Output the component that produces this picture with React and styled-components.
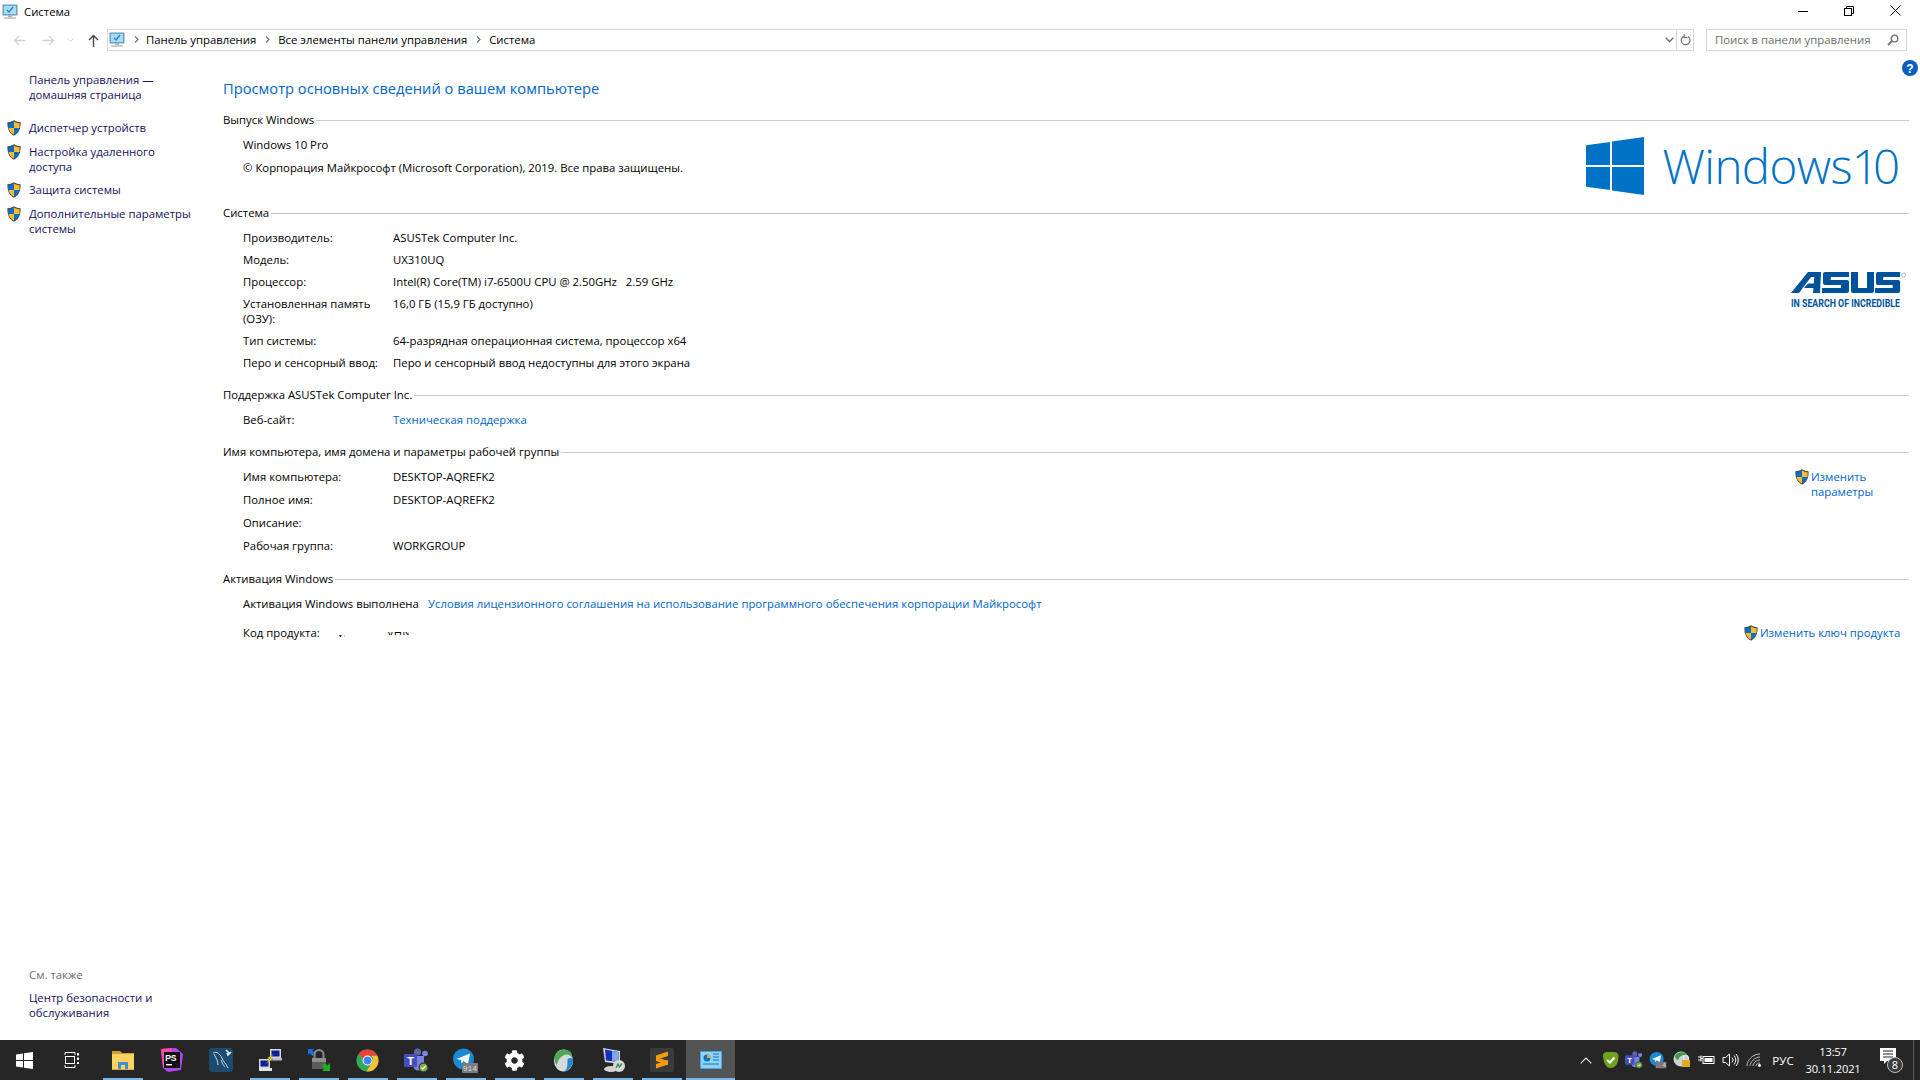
import React from "react";
import styled, { createGlobalStyle } from "styled-components";
import { FaCog } from "react-icons/fa";

const Global = createGlobalStyle`
  html, body { margin: 0; padding: 0; background: #fff; }
  #root { width: 1920px; height: 1080px; overflow: hidden; }
  * { box-sizing: border-box; }
`;

const Page = styled.div`
  width: 1920px; height: 1080px; display: flex; flex-direction: column;
  font-family: "Open Sans", "Noto Sans", "Liberation Sans", sans-serif;
  font-size: 11.35px; line-height: 15px; color: #000; background: #fff;
`;

/* Title bar */
const TitleBar = styled.div`
  height: 24px; flex: none; display: flex; align-items: flex-start;
`;
const TitleIconSlot = styled.div`
  width: 24px; padding: 4px 0 0 2px; flex: none; line-height: 0;
`;
const TitleText = styled.div`
  flex: 1; padding-top: 4px;
`;
const WinButton = styled.div`
  width: 46px; height: 21px; display: flex; align-items: center; justify-content: center; flex: none;
`;
const WinButtons = styled.div`
  display: flex; padding-right: 2px;
`;

/* Navigation bar */
const NavBar = styled.div`
  height: 22px; margin-top: 5px; flex: none; display: flex; align-items: center;
`;
const NavButtons = styled.div`
  width: 107px; flex: none; display: flex; align-items: center; height: 100%;
`;
const NavButton = styled.div`
  width: ${p => p.$w}px; height: 100%; display: flex; align-items: center; justify-content: center; flex: none;
`;
const AddressBar = styled.div`
  width: 1587px; height: 22px; border: 1px solid #d9d9d9; display: flex; align-items: center; flex: none;
`;
const AddressIcon = styled.div`
  width: 18px; padding-left: 1px; line-height: 0; flex: none;
`;
const Crumbs = styled.div`
  flex: 1; display: flex; align-items: center; white-space: nowrap; padding-bottom: 1px;
`;
const CrumbSep = styled.div`
  width: ${p => p.$w}px; display: flex; align-items: center; justify-content: center; flex: none; line-height: 0;
`;
const Crumb = styled.span`
  color: #000;
`;
const AddrDrop = styled.div`
  width: 14px; height: 100%; display: flex; align-items: center; justify-content: center; flex: none;
`;
const AddrRefresh = styled.div`
  width: 17px; height: 100%; border-left: 1px solid #d9d9d9; display: flex; align-items: center; justify-content: center; flex: none;
`;
const SearchBox = styled.div`
  width: 201px; height: 22px; margin-left: 12px; border: 1px solid #d9d9d9; display: flex; align-items: center;
  justify-content: space-between; padding: 0 7px 1px 8px; color: #6d6d6d; flex: none;
`;

/* Body */
const Body = styled.div`
  flex: 1; min-height: 0; display: flex;
`;
const Sidebar = styled.aside`
  width: 223px; flex: none; display: flex; flex-direction: column; padding: 21px 0 20px 0;
`;
const SideHome = styled.div`
  padding-left: 29px; margin-bottom: 18px; color: #15105c; width: 170px;
`;
const SideItem = styled.div`
  display: flex; margin-bottom: 8px; color: #15105c;
`;
const ShieldSlot = styled.div`
  width: 29px; flex: none; padding: 0 0 0 7px; line-height: 0;
`;
const SideText = styled.div`
  width: 165px;
`;
const SeeAlso = styled.div`
  margin-top: auto; padding-left: 29px;
`;
const SeeTitle = styled.div`
  color: #6d6d6d; margin-bottom: 8px;
`;
const SeeLink = styled.div`
  color: #15105c; width: 150px;
`;

const Main = styled.main`
  flex: 1; min-width: 0; padding: 27px 11px 0 0; position: relative;
`;
const HelpIcon = styled.div`
  position: absolute; right: 2px; top: 9px; line-height: 0;
`;
const HelpMark = styled.text`
  font-family: "Liberation Sans", sans-serif; font-weight: 700; font-size: 12px; fill: #fff;
`;
const Heading = styled.h1`
  margin: 0 0 14px 0; font-weight: 400; font-size: 14.7px; line-height: 20px; color: #0066cc;
`;
const SectionHead = styled.div`
  display: flex; align-items: center; height: 15px; gap: 2px;
  &::after { content: ""; flex: 1; height: 1px; margin-top: 2px; background: #c8c8c8; }
`;
const SectionBody = styled.div`
  padding: ${p => p.$pt}px 0 0 20px; margin-bottom: ${p => p.$mb ?? 0}px; display: flex; justify-content: space-between;
`;
const Rows = styled.div`
  display: flex; flex-direction: column; gap: ${p => p.$gap}px; flex: none;
`;
const Row = styled.div`
  display: flex;
`;
const Key = styled.div`
  width: ${p => p.$w ?? 150}px; flex: none; padding-right: ${p => p.$pr ?? 0}px;
`;
const Val = styled.div`
  white-space: pre;
`;
const Link = styled.span`
  color: #0066cc;
`;
const Aside = styled.div`
  flex: none; display: flex; flex-direction: column;
`;
const WinLogoWrap = styled.div`
  display: flex; align-items: center; margin-top: -1px; padding-right: 15px; gap: 18px;
`;
const WinWord = styled.div`
  font-weight: 300; font-size: 47.5px; line-height: 60px; color: #0072c6; letter-spacing: -0.6px; word-spacing: -12px; white-space: nowrap;
`;
const WinVersion = styled.span`
  letter-spacing: -6px;
`;
const AsusSlot = styled.div`
  line-height: 0; margin-top: 42px;
`;
const ChangeLink = styled.div`
  display: flex; width: ${p => p.$w}px; margin-right: ${p => p.$mr}px; padding-top: ${p => p.$pt ?? 0}px; flex: none; color: #0066cc;
  white-space: ${p => (p.$nowrap ? "nowrap" : "normal")};
`;
const ShieldTight = styled.div`
  flex: none; width: 16px; line-height: 0;
`;
const Redact = styled.div`
  display: flex; width: 80px;
`;
const RedactBit = styled.span`
  overflow: hidden; display: block; height: ${p => p.$h}px; width: ${p => p.$w}px; margin-top: ${p => p.$t}px; margin-left: ${p => p.$l}px;
  & > i { display: block; font-style: normal; white-space: nowrap; margin-top: ${p => -p.$t}px; }
`;

/* Taskbar */
const Taskbar = styled.footer`
  height: 40px; flex: none; background: #262626; display: flex; color: #fff;
`;
const Cell = styled.div`
  width: 49px; height: 40px; flex: none; display: flex; align-items: center; justify-content: center; position: relative; line-height: 0;
  padding-right: ${p => p.$pr ?? 0}px;
  background: ${p => (p.$active ? "#545454" : "transparent")};
  ${p => p.$open && `
    &::after { content: ""; position: absolute; bottom: 0; height: 2px; background: #76b9ed;
      left: ${p.$active ? 0 : 5}px; right: ${p.$active ? 0 : 4}px; }
  `}
`;
const Tray = styled.div`
  margin-left: auto; display: flex; align-items: center; height: 40px;
`;
const TrayIcon = styled.div`
  width: 24px; height: 40px; display: flex; align-items: center; justify-content: center; flex: none; line-height: 0;
`;
const Lang = styled.div`
  width: 34px; text-align: center; font-size: 11.5px; color: #fff; flex: none;
`;
const Clock = styled.div`
  width: 66px; margin-right: 5px; text-align: center; font-size: 11.2px; letter-spacing: -0.2px; line-height: 17px; color: #fff; flex: none;
`;
const Notif = styled.div`
  width: 44px; height: 40px; display: flex; align-items: center; justify-content: center; flex: none; line-height: 0;
`;
const ShowDesk = styled.div`
  width: 5px; height: 40px; flex: none; border-left: 1px solid #5f5f5f; margin-left: -2px; margin-right: 2px;
`;

/* Icons */
const SysIcon = ({ s = 16 }) => (
  <svg width={s} height={s} viewBox="0 0 16 16">
    <rect x="1" y="1" width="14" height="10" fill="#5fb6ea" stroke="#7d8fa0" strokeWidth="1" />
    <rect x="2" y="2" width="12" height="8" fill="#a5dcf8" />
    <path d="M5 6l2 2 4-5" stroke="#2a7fc0" strokeWidth="1.3" fill="none" />
    <rect x="6" y="11" width="4" height="2" fill="#aeb6bc" />
    <rect x="2" y="13" width="12" height="2" fill="#c7ccd1" />
  </svg>
);
const Shield = ({ w = 14, h = 16 }) => (
  <svg width={w} height={h} viewBox="0 0 14 16">
    <path d="M7 0.3C5 1.6 2.6 2.3 0.4 2.3 0.2 8 1.5 13 7 15.8 12.5 13 13.8 8 13.6 2.3 11.4 2.3 9 1.6 7 0.3Z" fill="#4c4c4c" />
    <path d="M7 1.5V8H1.5C1.4 6 1.4 4.7 1.5 3.3 3.3 3.2 5.3 2.6 7 1.5Z" fill="#0b6fc9" />
    <path d="M7 1.5V8H12.5C12.6 6 12.6 4.7 12.5 3.3 10.7 3.2 8.7 2.6 7 1.5Z" fill="#f9bd2b" />
    <path d="M1.6 8H7V14.6C3.6 12.8 2 10.6 1.6 8Z" fill="#f9bd2b" />
    <path d="M12.4 8H7V14.6C10.4 12.8 12 10.6 12.4 8Z" fill="#0b6fc9" />
  </svg>
);
const BigWin = () => (
  <svg width="58" height="58" viewBox="0 0 58 58">
    <path d="M0 8.2L24 5V28H0Z M26 4.6L58 0V28H26Z M0 30H24V53L0 49.8Z M26 30H58V58L26 53.4Z" fill="#0072c6" />
  </svg>
);
const Arrow = ({ dir, color }) => (
  <svg width="13" height="11" viewBox="0 0 13 11" style={{ transform: dir === "r" ? "scaleX(-1)" : "none" }}>
    <path d="M12.5 5.5H1.5M6 1L1.5 5.5L6 10" fill="none" stroke={color} strokeWidth="1.3" />
  </svg>
);
const Chev = ({ c = "#707070" }) => (
  <svg width="5" height="7" viewBox="0 0 5 7"><path d="M1 .5L4 3.5L1 6.5" fill="none" stroke={c} strokeWidth="1.2" /></svg>
);
const AsusS = "M3 0H27V5H9L8.6 8H25Q27 8 27 10V19Q27 21 25 21H0V16H19V13H3Q1 13 1 11V2Q1 0 3 0Z";
const AsusLogo = () => (
  <svg width="118" height="38" viewBox="0 0 118 38">
    <g fill="#00539b">
      <path d="M0 21L17 0H30L29 21H22L22.4 16H13L17 11.5H22.8L23.3 5H20L8 21Z" />
      <path d={AsusS} transform="translate(31 0)" />
      <path d="M60 0H67V16H76V0H83V19Q83 21 81 21H62Q60 21 60 19Z" />
      <path d={AsusS} transform="translate(84 0) scale(.93 1)" />
    </g>
    <text x="0" y="35" fontFamily="Roboto, Liberation Sans" fontWeight="700" fontSize="11" textLength="109" lengthAdjust="spacingAndGlyphs" fill="#00539b">IN SEARCH OF INCREDIBLE</text>
    <circle cx="112.5" cy="3" r="2" fill="none" stroke="#5b8fc0" strokeWidth=".6" />
  </svg>
);
const StartLogo = () => (
  <svg width="17" height="17" viewBox="0 0 17 17"><path d="M0 2.4L7 1.4V8H0Z M8 1.2L17 0V8H8Z M0 9H7V15.6L0 14.6Z M8 9H17V17L8 15.8Z" fill="#fff" /></svg>
);
const TaskView = () => (
  <svg width="16" height="16" viewBox="0 0 16 16" fill="none" stroke="#fff" strokeWidth="1">
    <path d="M1 .5H11M1 15.5H11M1 3V.5M11 3V.5M1 13V15.5M11 13V15.5" />
    <rect x="1.5" y="4.5" width="9" height="7" />
    <path d="M14 1V3.5M14 5.5V8M14 10V12" strokeWidth="2" />
  </svg>
);
const Folder = () => (
  <svg width="22" height="20" viewBox="0 0 22 20">
    <path d="M0 1H8L10 3H22V19H0Z" fill="#d69b2f" />
    <rect y="4" width="22" height="16" fill="#fcd35f" />
    <path d="M6 20V12H16V20H13V15H9V20Z" fill="#3c8fd6" />
    <rect x="0" y="19" width="22" height="1" fill="#e0a93f" />
  </svg>
);
const PhpStorm = () => (
  <svg width="24" height="24" viewBox="0 0 24 24">
    <path d="M1 1L16 0 23 6 21 22 8 24 3 20Z" fill="#b345f1" />
    <path d="M1 1L12 0 9 8 3 20Z" fill="#fc4fa1" />
    <rect x="4" y="4" width="16" height="16" fill="#111" />
    <text x="5.2" y="12.5" fontFamily="Liberation Sans" fontWeight="700" fontSize="8.5" fill="#fff">PS</text>
    <rect x="6" y="16" width="6" height="1.4" fill="#fff" />
  </svg>
);
const Workbench = () => (
  <svg width="24" height="24" viewBox="0 0 24 24">
    <rect width="24" height="24" rx="3" fill="#1e4a6e" />
    <path d="M4 5C8 3 11 6 13 10C14 14 17 15 19 20M5 6C7 10 9 13 9 17M12 12C14 17 15 18 16 19" fill="none" stroke="#c7d8e6" strokeWidth="1" />
    <path d="M17 2L20 5M22 4L19 7L18 5" stroke="#e4edf4" strokeWidth="1.6" fill="none" />
  </svg>
);
const Putty = () => (
  <svg width="24" height="24" viewBox="0 0 24 24">
    <rect x="12" y="1" width="11" height="9" fill="#d7d7d7" />
    <rect x="13.5" y="2.5" width="8" height="6" fill="#0a1e9c" />
    <rect x="13" y="10" width="11" height="2.5" fill="#bdbdbd" />
    <rect x="1" y="11" width="11" height="9" fill="#d7d7d7" />
    <rect x="2.5" y="12.5" width="8" height="6" fill="#0a1e9c" />
    <rect x="1" y="20" width="13" height="3" fill="#e2e2e2" />
    <path d="M16 6L9 10 12 11 7 16 15 11 12 10Z" fill="#f5e61b" stroke="#3a3a00" strokeWidth=".3" />
  </svg>
);
const VpnLock = () => (
  <svg width="24" height="24" viewBox="0 0 24 24">
    <path d="M1 1H7L5.3 2.7 8 5.4 5.4 8 2.7 5.3 1 7Z" fill="#1b6fe0" />
    <path d="M7.5 10V6.5a4.5 4.5 0 0 1 9 0V10" fill="none" stroke="#8c8c8c" strokeWidth="2" />
    <rect x="5" y="10" width="14" height="11" rx="1" fill="#5b5b5b" />
    <rect x="5" y="10" width="14" height="4" fill="#8f8f8f" />
    <path d="M23 23H15L17.5 20.5 15 18 18 15 20.5 17.5 23 15Z" fill="#19b21f" />
  </svg>
);
const Chrome = ({ s = 23 }) => (
  <svg width={s} height={s} viewBox="0 0 24 24">
    <circle cx="12" cy="12" r="11.5" fill="#34a853" />
    <path d="M12 .5A11.5 11.5 0 0 1 22.2 7H12A5 5 0 0 0 7.5 10L2.6 5.3A11.5 11.5 0 0 1 12 .5Z" fill="#ea4335" />
    <path d="M22.2 7A11.5 11.5 0 0 1 11 23.5L16.2 14.6A5 5 0 0 0 16 7Z" fill="#fbc02d" />
    <circle cx="12" cy="12" r="5.2" fill="#fff" />
    <circle cx="12" cy="12" r="4.2" fill="#4285f4" />
  </svg>
);
const Teams = ({ s = 25 }) => (
  <svg width={s} height={s} viewBox="0 0 25 25">
    <circle cx="13.5" cy="4" r="3.5" fill="#6264a7" />
    <circle cx="21" cy="5.5" r="2.8" fill="#7b83eb" />
    <path d="M9 8H20V17A5.5 5.5 0 0 1 9 17Z" fill="#7b83eb" />
    <rect x="0" y="6" width="13" height="13" rx="1" fill="#464eb8" />
    <text x="3.2" y="16.5" fontFamily="Liberation Sans" fontWeight="700" fontSize="11" fill="#fff">T</text>
    <circle cx="19.5" cy="19.5" r="5" fill="#3c3c3c" />
    <circle cx="19.5" cy="19.5" r="3.8" fill="#79b33a" />
    <path d="M17.5 19.5L19 21L21.6 18" fill="none" stroke="#fff" strokeWidth="1.2" />
  </svg>
);
const Badge = styled.text`
  font-family: "Liberation Sans", sans-serif; font-size: 8px; fill: #dcdcdc;
`;
const Telegram = ({ badge, s = 27 }) => (
  <svg width={s} height={s} viewBox="0 0 27 27">
    <circle cx="11.5" cy="12" r="10.5" fill="#1a8ad5" />
    <path d="M4.5 12L18 6.5 16 17 11.5 14 9.5 16.5 9 13Z" fill="#fff" />
    <rect x="10" y="16" width="16" height="10" rx="1" fill="#7c7c7c" />
    <Badge x="11" y="24" textLength="14">{badge}</Badge>
  </svg>
);
const Globe = ({ s = 23 }) => (
  <svg width={s} height={s} viewBox="0 0 24 24">
    <ellipse cx="12" cy="12" rx="10" ry="11.5" fill="#d6dadc" />
    <path d="M5 17C2 13 2 8 4 5 7 1 13-.5 18 2 21 4 21.5 8 21 9 18 5 13 5 10 8 7 10 5.5 13 5 17Z" fill="#4fa655" />
    <path d="M22 10C22.5 16 18 23 13 23.5 16 21 16.5 16 16 11 18 9 20 9 22 10Z" fill="#1e8bcf" />
  </svg>
);
const Rdp = () => (
  <svg width="26" height="28" viewBox="0 0 26 28">
    <path d="M3 2L20 5V18L5 16Z" fill="#d8d8d8" />
    <path d="M5 3.5L18.5 6V16L6 14.5Z" fill="#1130c4" />
    <path d="M12 5L18.5 6V16L12 15Z" fill="#7fa6e8" />
    <ellipse cx="11" cy="23" rx="7" ry="3" fill="#d4d4d4" />
    <circle cx="19" cy="20" r="6" fill="#d9d9d9" />
    <path d="M16 22L18 18 19.5 21 22 17.5" fill="none" stroke="#2d8a3e" strokeWidth="1.3" />
  </svg>
);
const Sublime = () => (
  <svg width="24" height="24" viewBox="0 0 24 24">
    <rect width="24" height="24" rx="2" fill="#3a3a3a" />
    <path d="M6 7.5L18 3.5V8L6 12Z M6 9L18 13V17L6 13Z M6 16L18 12V16.5L6 20.5Z" fill="#f79a0b" />
  </svg>
);
const Panel = () => (
  <svg width="22" height="18" viewBox="0 0 22 18">
    <rect width="22" height="18" rx="1" fill="#3fa9ea" />
    <rect x="1" y="1" width="20" height="16" fill="#8fd3f7" />
    <circle cx="7" cy="7" r="3.5" fill="#0d73c4" />
    <path d="M7 7V3.5A3.5 3.5 0 0 1 10.5 7Z" fill="#f5a623" />
    <path d="M13 3H19M13 6H19M13 9H19M3 13H19" stroke="#1476c4" strokeWidth="1.2" />
  </svg>
);
const TrayShield = () => (
  <svg width="17" height="16" viewBox="0 0 17 16">
    <path d="M1 3C1 1 3 0 5 0H12C15 0 16.5 2 16.5 4C16.5 9 15 16 8.5 16C3 16 1 8 1 3Z" fill="#6ca21f" />
    <path d="M5 8L8 10.5L12.5 5.5" fill="none" stroke="#fff" strokeWidth="2" />
  </svg>
);
const TrayGlobeLock = () => (
  <svg width="18" height="18" viewBox="0 0 18 18">
    <circle cx="8" cy="8" r="7.5" fill="#c9d2d6" />
    <path d="M2 5C4 1 12-1 15 5 11 3 7 4 5 9 3 8 2 7 2 5Z" fill="#3f9a4a" />
    <rect x="9" y="9" width="8" height="7" fill="#e0a91e" />
    <path d="M10.5 9V7a2.5 2.5 0 0 1 5 0V9" fill="none" stroke="#e4e4e4" strokeWidth="1.2" />
  </svg>
);
const TrayBattery = () => (
  <svg width="17" height="16" viewBox="0 0 17 16" fill="none" stroke="#fff" strokeWidth="1">
    <rect x="5" y="4.5" width="11" height="7" />
    <rect x="6.5" y="6" width="8" height="4" fill="#fff" stroke="none" />
    <path d="M0 5H3M0 8H3M3 3.5V9.5M3 6.5H5" />
  </svg>
);
const TrayVolume = () => (
  <svg width="17" height="16" viewBox="0 0 17 16" fill="none" stroke="#fff" strokeWidth="1">
    <path d="M1 5.5H3.5L7.5 2V14L3.5 10.5H1Z" />
    <path d="M10 5.5a3.5 3.5 0 0 1 0 5M12 3.5a6.5 6.5 0 0 1 0 9M14 2a9 9 0 0 1 0 12" />
  </svg>
);
const TrayWifi = () => (
  <svg width="16" height="14" viewBox="0 0 16 14" fill="none" stroke="#bfbfbf" strokeWidth="1">
    <path d="M1 13C1 7 7 1 14 1M4 13C4 9 9 4 14 4M7 13C7 10.5 10 7 14 7M10 13C10 11.5 11.5 10 14 10" />
    <circle cx="13.5" cy="12.5" r="1.4" fill="#fff" stroke="none" />
  </svg>
);
const NotifCount = styled.text`
  font-family: "Open Sans", sans-serif; font-size: 11px; fill: #fff;
`;
const NotifIcon = () => (
  <svg width="26" height="30" viewBox="0 0 26 30">
    <path d="M0 3H16V16H7L4 19V16H0Z" fill="#fff" />
    <path d="M3 6H13M3 9H13M3 12H13" stroke="#262626" strokeWidth="1" />
    <circle cx="15" cy="20" r="7.5" fill="#3a3a3a" stroke="#bdbdbd" strokeWidth="1" />
    <NotifCount x="15" y="24" textAnchor="middle">8</NotifCount>
  </svg>
);

const taskIcons = [
  { el: <StartLogo /> },
  { el: <TaskView />, pr: 4 },
  { el: <Folder />, open: true },
  { el: <PhpStorm /> },
  { el: <Workbench /> },
  { el: <Putty />, open: true },
  { el: <VpnLock />, open: true },
  { el: <Chrome />, open: true },
  { el: <Teams />, open: true },
  { el: <Telegram badge="914" />, open: true },
  { el: <FaCog size={21} color="#fff" />, open: true },
  { el: <Globe />, open: true },
  { el: <Rdp />, open: true },
  { el: <Sublime />, open: true },
  { el: <Panel />, open: true, active: true },
];

const sideItems = [
  "Диспетчер устройств",
  "Настройка удаленного доступа",
  "Защита системы",
  "Дополнительные параметры системы",
];

const systemRows = [
  ["Производитель:", "ASUSTek Computer Inc."],
  ["Модель:", "UX310UQ"],
  ["Процессор:", "Intel(R) Core(TM) i7-6500U CPU @ 2.50GHz   2.59 GHz"],
  ["Установленная память (ОЗУ):", "16,0 ГБ (15,9 ГБ доступно)"],
  ["Тип системы:", "64-разрядная операционная система, процессор x64"],
  ["Перо и сенсорный ввод:", "Перо и сенсорный ввод недоступны для этого экрана"],
];
const computerRows = [
  ["Имя компьютера:", "DESKTOP-AQREFK2"],
  ["Полное имя:", "DESKTOP-AQREFK2"],
  ["Описание:", ""],
  ["Рабочая группа:", "WORKGROUP"],
];

export default function App() {
  return (
    <Page>
      <Global />
      <TitleBar>
        <TitleIconSlot><SysIcon /></TitleIconSlot>
        <TitleText>Система</TitleText>
        <WinButtons>
          <WinButton><svg width="10" height="10" viewBox="0 0 10 10"><path d="M0 5.5H10" stroke="#000" /></svg></WinButton>
          <WinButton><svg width="10" height="10" viewBox="0 0 10 10" fill="none" stroke="#000"><rect x=".5" y="2.5" width="7" height="7" /><path d="M2.5 2.5V.5H9.5V7.5H7.5" /></svg></WinButton>
          <WinButton><svg width="11" height="11" viewBox="0 0 11 11"><path d="M.5 .5L10.5 10.5M10.5 .5L.5 10.5" stroke="#000" /></svg></WinButton>
        </WinButtons>
      </TitleBar>
      <NavBar>
        <NavButtons>
          <NavButton $w={38}><Arrow color="#d2d2d2" /></NavButton>
          <NavButton $w={20}><Arrow dir="r" color="#d2d2d2" /></NavButton>
          <NavButton $w={25}><svg width="7" height="5" viewBox="0 0 7 5"><path d="M.5 .5L3.5 3.5L6.5 .5" fill="none" stroke="#d2d2d2" /></svg></NavButton>
          <NavButton $w={20}><svg width="11" height="13" viewBox="0 0 11 13"><path d="M5.5 13V1.5M1 6L5.5 1.5L10 6" fill="none" stroke="#4a4a4a" strokeWidth="1.4" /></svg></NavButton>
        </NavButtons>
        <AddressBar>
          <AddressIcon><SysIcon /></AddressIcon>
          <Crumbs>
            <CrumbSep $w={20}><Chev /></CrumbSep>
            <Crumb>Панель управления</Crumb>
            <CrumbSep $w={22}><Chev /></CrumbSep>
            <Crumb>Все элементы панели управления</Crumb>
            <CrumbSep $w={22}><Chev /></CrumbSep>
            <Crumb>Система</Crumb>
          </Crumbs>
          <AddrDrop><svg width="9" height="6" viewBox="0 0 9 6"><path d="M.7 .7L4.5 4.5L8.3 .7" fill="none" stroke="#707070" strokeWidth="1.4" /></svg></AddrDrop>
          <AddrRefresh><svg width="11" height="12" viewBox="0 0 11 12"><path d="M8 2.6A4.4 4.4 0 1 1 4 2.2M4.2 .2V3.6H7.4" fill="none" stroke="#707070" strokeWidth="1.2" /></svg></AddrRefresh>
        </AddressBar>
        <SearchBox>
          <span>Поиск в панели управления</span>
          <svg width="12" height="12" viewBox="0 0 12 12"><circle cx="7.5" cy="4.5" r="3.3" fill="none" stroke="#707070" strokeWidth="1.3" /><path d="M5 7L1 11" stroke="#707070" strokeWidth="1.8" /></svg>
        </SearchBox>
      </NavBar>
      <Body>
        <Sidebar>
          <SideHome>Панель управления — домашняя страница</SideHome>
          {sideItems.map(t => (
            <SideItem key={t}>
              <ShieldSlot><Shield /></ShieldSlot>
              <SideText>{t}</SideText>
            </SideItem>
          ))}
          <SeeAlso>
            <SeeTitle>См. также</SeeTitle>
            <SeeLink>Центр безопасности и обслуживания</SeeLink>
          </SeeAlso>
        </Sidebar>
        <Main>
          <HelpIcon>
            <svg width="16" height="16" viewBox="0 0 16 16">
              <circle cx="8" cy="8" r="8" fill="#0a5ec0" />
              <HelpMark x="8" y="12.5" textAnchor="middle">?</HelpMark>
            </svg>
          </HelpIcon>
          <Heading>Просмотр основных сведений о вашем компьютере</Heading>

          <SectionHead>Выпуск Windows</SectionHead>
          <SectionBody $pt={10} $mb={9}>
            <Rows $gap={8}>
              <Row>Windows 10 Pro</Row>
              <Row>© Корпорация Майкрософт (Microsoft Corporation), 2019. Все права защищены.</Row>
            </Rows>
            <Aside>
              <WinLogoWrap>
                <BigWin />
                <WinWord>Windows <WinVersion>10</WinVersion></WinWord>
              </WinLogoWrap>
            </Aside>
          </SectionBody>

          <SectionHead>Система</SectionHead>
          <SectionBody $pt={10} $mb={17}>
            <Rows $gap={7}>
              {systemRows.map(([k, v]) => (
                <Row key={k}><Key $pr={k.length > 25 ? 20 : 0}>{k}</Key><Val>{v}</Val></Row>
              ))}
            </Rows>
            <Aside>
              <AsusSlot><AsusLogo /></AsusSlot>
            </Aside>
          </SectionBody>

          <SectionHead>Поддержка ASUSTek Computer Inc.</SectionHead>
          <SectionBody $pt={10} $mb={17}>
            <Row><Key>Веб-сайт:</Key><Link>Техническая поддержка</Link></Row>
          </SectionBody>

          <SectionHead>Имя компьютера, имя домена и параметры рабочей группы</SectionHead>
          <SectionBody $pt={10} $mb={18}>
            <Rows $gap={8}>
              {computerRows.map(([k, v]) => (
                <Row key={k}><Key>{k}</Key><Val>{v}</Val></Row>
              ))}
            </Rows>
            <ChangeLink $w={86} $mr={28}>
              <ShieldTight><Shield /></ShieldTight>
              <span>Изменить параметры</span>
            </ChangeLink>
          </SectionBody>

          <SectionHead>Активация Windows</SectionHead>
          <SectionBody $pt={10}>
            <Rows $gap={14}>
              <Row><Key $w={185}>Активация Windows выполнена</Key><Link>Условия лицензионного соглашения на использование программного обеспечения корпорации Майкрософт</Link></Row>
              <Row>
                <Key $w={94}>Код продукта:</Key>
                <Redact>
                  <RedactBit $h={2} $w={8} $t={10} $l={0}><i>VHN1</i></RedactBit>
                  <RedactBit $h={3} $w={22} $t={7} $l={42}><i>VHN1</i></RedactBit>
                </Redact>
              </Row>
            </Rows>
            <ChangeLink $w={155} $mr={10} $pt={29} $nowrap>
              <ShieldTight><Shield /></ShieldTight>
              <span>Изменить ключ продукта</span>
            </ChangeLink>
          </SectionBody>
        </Main>
      </Body>
      <Taskbar>
        {taskIcons.map((t, i) => (
          <Cell key={i} $open={t.open} $active={t.active} $pr={t.pr}>{t.el}</Cell>
        ))}
        <Tray>
          <TrayIcon><svg width="12" height="7" viewBox="0 0 12 7"><path d="M.7 6.3L6 1L11.3 6.3" fill="none" stroke="#e8e8e8" strokeWidth="1.1" /></svg></TrayIcon>
          <TrayIcon><TrayShield /></TrayIcon>
          <TrayIcon><Teams s={18} /></TrayIcon>
          <TrayIcon><Telegram badge=".4" s={18} /></TrayIcon>
          <TrayIcon><TrayGlobeLock /></TrayIcon>
          <TrayIcon><TrayBattery /></TrayIcon>
          <TrayIcon><TrayVolume /></TrayIcon>
          <TrayIcon><TrayWifi /></TrayIcon>
          <Lang>РУС</Lang>
          <Clock>13:57<br />30.11.2021</Clock>
          <Notif><NotifIcon /></Notif>
          <ShowDesk />
        </Tray>
      </Taskbar>
    </Page>
  );
}
